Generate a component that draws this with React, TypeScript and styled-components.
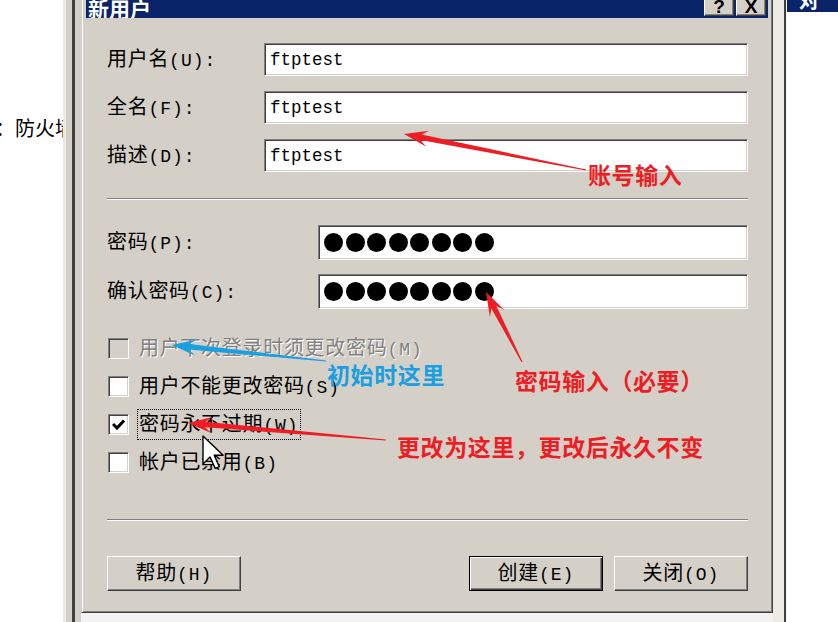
import React from "react";
import styled, { createGlobalStyle } from "styled-components";

const GRAY = "#d4d0c8";
const RED = "#ee1d24";
const BLUE = "#1a9fe0";

const GlobalStyle = createGlobalStyle`
  html, body {
    margin: 0;
    padding: 0;
    background: #fff;
    overflow: hidden;
  }
  body {
    font-family: "Noto Sans CJK SC", "Noto Sans", sans-serif;
  }
`;

const Screen = styled.div`
  position: relative;
  width: 838px;
  height: 622px;
  display: flex;
  overflow: hidden;
  background: #fff;
`;

const LeftPane = styled.div`
  width: 63px;
  flex: none;
  overflow: hidden;
  padding-top: 113px;
  box-sizing: border-box;
`;

const LeftText = styled.div`
  margin-left: -5px;
  white-space: nowrap;
  font-size: 20px;
  line-height: 30px;
  color: #000;
`;

const LeftFrame = styled.div`
  width: 18px;
  flex: none;
  background: linear-gradient(
    to right,
    #e9e9e9 0 3px,
    ${GRAY} 3px 9px,
    #404040 9px 12px,
    ${GRAY} 12px
  );
`;

const DialogColumn = styled.div`
  width: 692px;
  flex: none;
  background: #f2f2f2;
`;

const Dialog = styled.div`
  margin-top: -8px;
  height: 621px;
  box-sizing: border-box;
  background: ${GRAY};
  border: 1px solid;
  border-color: ${GRAY} #404040 #404040 ${GRAY};
  box-shadow: inset 1px 1px #fff, inset -1px -1px #808080;
  padding: 4px 4px 0 4px;
  display: flex;
  flex-direction: column;
`;

const TitleBar = styled.div`
  height: 21px;
  flex: none;
  background: #0a246a;
  display: flex;
  align-items: flex-start;
  padding-left: 2px;
  padding-right: 2px;
  overflow: hidden;
`;

const TitleText = styled.div`
  flex: 1;
  color: #fff;
  font-weight: 700;
  font-size: 21px;
  line-height: 22px;
  margin-top: 0px;
`;

const TitleButton = styled.div`
  width: 30px;
  height: 18px;
  margin-top: 1px;
  margin-left: 2px;
  box-sizing: border-box;
  background: ${GRAY};
  border: 1px solid;
  border-color: #fff #404040 #404040 #fff;
  box-shadow: inset -1px -1px #808080;
  display: flex;
  align-items: flex-end;
  justify-content: center;
  font-family: "Liberation Sans", Arial, sans-serif;
  font-weight: 700;
  font-size: 19px;
  line-height: 16px;
  color: #000;
`;

const Body = styled.div`
  flex: 1;
  display: flex;
  flex-direction: column;
  padding: 0 20px 0 21px;
`;

const FieldGrid = styled.div<{ $labelWidth: number; $top: number; $rowGap: number; $rowHeight: number }>`
  display: grid;
  grid-template-columns: ${(p) => p.$labelWidth}px 1fr;
  grid-auto-rows: ${(p) => p.$rowHeight}px;
  row-gap: ${(p) => p.$rowGap}px;
  align-items: center;
  margin-top: ${(p) => p.$top}px;
`;

const Label = styled.span<{ $disabled?: boolean }>`
  font-size: 20px;
  line-height: 24px;
  letter-spacing: 0.7px;
  white-space: nowrap;
  color: ${(p) => (p.$disabled ? "#808080" : "#000")};
  text-shadow: ${(p) => (p.$disabled ? "1px 1px #fff" : "none")};
`;

const Hotkey = styled.span`
  font-family: "Liberation Mono", "DejaVu Sans Mono", monospace;
  font-size: 18px;
  letter-spacing: 1px;
`;

const Field = styled.div`
  height: 100%;
  box-sizing: border-box;
  background: #fff;
  border: 1px solid;
  border-color: #808080 #fff #fff #808080;
  box-shadow: inset 1px 1px #404040, inset -1px -1px ${GRAY};
  padding: 0 6px 0 5px;
  display: flex;
  align-items: center;
  font-family: "Liberation Mono", "DejaVu Sans Mono", monospace;
  font-size: 17.5px;
  color: #000;
`;

const Dots = styled.div`
  display: flex;
  gap: 2.5px;
`;

const Dot = styled.span`
  width: 19px;
  height: 19px;
  border-radius: 50%;
  background: #000;
`;

const Separator = styled.div<{ $top: number }>`
  margin-top: ${(p) => p.$top}px;
  height: 0;
  border-top: 1px solid #808080;
  border-bottom: 1px solid #fff;
`;

const Checks = styled.div`
  margin-top: 20px;
  display: flex;
  flex-direction: column;
`;

const CheckRow = styled.div`
  height: 38px;
  display: flex;
  align-items: center;
  padding-left: 1px;
  gap: 8px;
`;

const Box = styled.div<{ $disabled?: boolean }>`
  width: 21px;
  height: 21px;
  flex: none;
  box-sizing: border-box;
  background: ${(p) => (p.$disabled ? GRAY : "#fff")};
  border: 1px solid;
  border-color: #808080 #fff #fff #808080;
  box-shadow: inset 1px 1px #404040, inset -1px -1px ${GRAY};
  display: flex;
  align-items: center;
  justify-content: center;
`;

const CheckText = styled.div<{ $focused?: boolean }>`
  padding: 1px 1px;
  border: 1px dotted ${(p) => (p.$focused ? "#000" : "transparent")};
  display: flex;
  align-items: center;
`;

const Buttons = styled.div`
  margin-top: 35px;
  display: flex;
  gap: 11px;
`;

const Spacer = styled.div`
  flex: 1;
`;

const Button = styled.div<{ $default?: boolean }>`
  width: 134px;
  height: 35px;
  box-sizing: border-box;
  background: ${GRAY};
  border: 1px solid;
  border-color: ${(p) => (p.$default ? "#000" : "#fff #404040 #404040 #fff")};
  box-shadow: ${(p) =>
    p.$default
      ? "inset 1px 1px #fff, inset -1px -1px #404040, inset -2px -2px #808080"
      : "inset -1px -1px #808080"};
  display: flex;
  align-items: center;
  justify-content: center;
`;

const GapStrip = styled.div`
  width: 14px;
  flex: none;
  background: linear-gradient(to right, #ecebe6 0 11px, #404040 11px 13px, #f4f4f4 13px);
`;

const RightPane = styled.div`
  flex: 1;
  background: #fff;
`;

const RightTitle = styled.div`
  height: 12px;
  background: #0a246a;
  overflow: hidden;
  padding-left: 12px;
`;

const RightTitleText = styled.div`
  margin-top: -10px;
  color: #fff;
  font-weight: 700;
  font-size: 20px;
  line-height: 20px;
`;

const Overlay = styled.div`
  position: absolute;
  inset: 0;
  pointer-events: none;
`;

const Drawing = styled.svg`
  position: absolute;
  left: 0;
  top: 0;
`;

const Note = styled.div<{ $x: number; $y: number; $color: string }>`
  position: absolute;
  left: ${(p) => p.$x}px;
  top: ${(p) => p.$y}px;
  color: ${(p) => p.$color};
  font-weight: 700;
  font-size: 23px;
  line-height: 23px;
  letter-spacing: 0.6px;
  white-space: nowrap;
`;

function arrowPoints(x1: number, y1: number, x2: number, y2: number): string {
  const dx = x2 - x1;
  const dy = y2 - y1;
  const len = Math.hypot(dx, dy);
  const ux = dx / len;
  const uy = dy / len;
  const nx = -uy;
  const ny = ux;
  const head = 24;
  const barb = 8;
  const neck = head * 0.72;
  const w = 2.8;
  const w0 = 0.6;
  const bx = x2 - ux * head;
  const by = y2 - uy * head;
  const sx = x2 - ux * neck;
  const sy = y2 - uy * neck;
  const pts = [
    [x1 + nx * w0, y1 + ny * w0],
    [sx + nx * w, sy + ny * w],
    [bx + nx * barb, by + ny * barb],
    [x2, y2],
    [bx - nx * barb, by - ny * barb],
    [sx - nx * w, sy - ny * w],
    [x1 - nx * w0, y1 - ny * w0],
  ];
  return pts.map(([x, y]) => `${x.toFixed(1)},${y.toFixed(1)}`).join(" ");
}

const arrows = [
  { from: [586, 170], to: [404, 134], color: RED },
  { from: [522, 362], to: [486, 292], color: RED },
  { from: [326, 361], to: [172, 345], color: BLUE },
  { from: [386, 440], to: [188, 423], color: RED },
];

const CheckMark = () => (
  <svg width="13" height="11" viewBox="0 0 13 11">
    <path d="M1 5 L5 9 L12 1.5" fill="none" stroke="#000" strokeWidth="3" />
  </svg>
);

const Text = ({ zh, hk, suffix = "", disabled }: { zh: string; hk: string; suffix?: string; disabled?: boolean }) => (
  <Label $disabled={disabled}>
    {zh}
    <Hotkey>
      ({hk}){suffix}
    </Hotkey>
  </Label>
);

const fields = [
  { zh: "用户名", hk: "U" },
  { zh: "全名", hk: "F" },
  { zh: "描述", hk: "D" },
];

const checks = [
  { zh: "用户下次登录时须更改密码", hk: "M", disabled: true },
  { zh: "用户不能更改密码", hk: "S" },
  { zh: "密码永不过期", hk: "W", checked: true, focused: true },
  { zh: "帐户已禁用", hk: "B" },
];

export default function App() {
  return (
    <>
      <GlobalStyle />
      <Screen>
        <LeftPane>
          <LeftText>：防火墙</LeftText>
        </LeftPane>
        <LeftFrame />
        <DialogColumn>
          <Dialog>
            <TitleBar>
              <TitleText>新用户</TitleText>
              <TitleButton>?</TitleButton>
              <TitleButton>X</TitleButton>
            </TitleBar>
            <Body>
              <FieldGrid $labelWidth={157} $top={25} $rowGap={15} $rowHeight={33}>
                {fields.map((f) => (
                  <React.Fragment key={f.hk}>
                    <Text zh={f.zh} hk={f.hk} suffix=":" />
                    <Field>ftptest</Field>
                  </React.Fragment>
                ))}
              </FieldGrid>
              <Separator $top={26} />
              <FieldGrid $labelWidth={211} $top={25} $rowGap={14} $rowHeight={35}>
                <Text zh="密码" hk="P" suffix=":" />
                <Field>
                  <Dots>
                    {Array.from({ length: 8 }).map((_, i) => (
                      <Dot key={i} />
                    ))}
                  </Dots>
                </Field>
                <Text zh="确认密码" hk="C" suffix=":" />
                <Field>
                  <Dots>
                    {Array.from({ length: 8 }).map((_, i) => (
                      <Dot key={i} />
                    ))}
                  </Dots>
                </Field>
              </FieldGrid>
              <Checks>
                {checks.map((c) => (
                  <CheckRow key={c.hk}>
                    <Box $disabled={c.disabled}>{c.checked && <CheckMark />}</Box>
                    <CheckText $focused={c.focused}>
                      <Text zh={c.zh} hk={c.hk} disabled={c.disabled} />
                    </CheckText>
                  </CheckRow>
                ))}
              </Checks>
              <Separator $top={38} />
              <Buttons>
                <Button>
                  <Text zh="帮助" hk="H" />
                </Button>
                <Spacer />
                <Button $default>
                  <Text zh="创建" hk="E" />
                </Button>
                <Button>
                  <Text zh="关闭" hk="O" />
                </Button>
              </Buttons>
            </Body>
          </Dialog>
        </DialogColumn>
        <GapStrip />
        <RightPane>
          <RightTitle>
            <RightTitleText>对</RightTitleText>
          </RightTitle>
        </RightPane>

        <Overlay>
          <Drawing width="838" height="622" viewBox="0 0 838 622">
            {arrows.map((a, i) => (
              <polygon key={i} points={arrowPoints(a.from[0], a.from[1], a.to[0], a.to[1])} fill={a.color} />
            ))}
            <path
              transform="translate(203 436) scale(1.75)"
              d="M0 0 L0 16 L4 12 L7 18.5 L9.3 17.5 L6.4 11 L11.5 11 Z"
              fill="#fff"
              stroke="#000"
              strokeWidth="0.8"
              strokeLinejoin="round"
            />
          </Drawing>
          <Note $x={588} $y={163} $color={RED}>账号输入</Note>
          <Note $x={327} $y={363} $color={BLUE}>初始时这里</Note>
          <Note $x={515} $y={369} $color={RED}>密码输入（必要）</Note>
          <Note $x={397} $y={435} $color={RED}>更改为这里，更改后永久不变</Note>
        </Overlay>
      </Screen>
    </>
  );
}
